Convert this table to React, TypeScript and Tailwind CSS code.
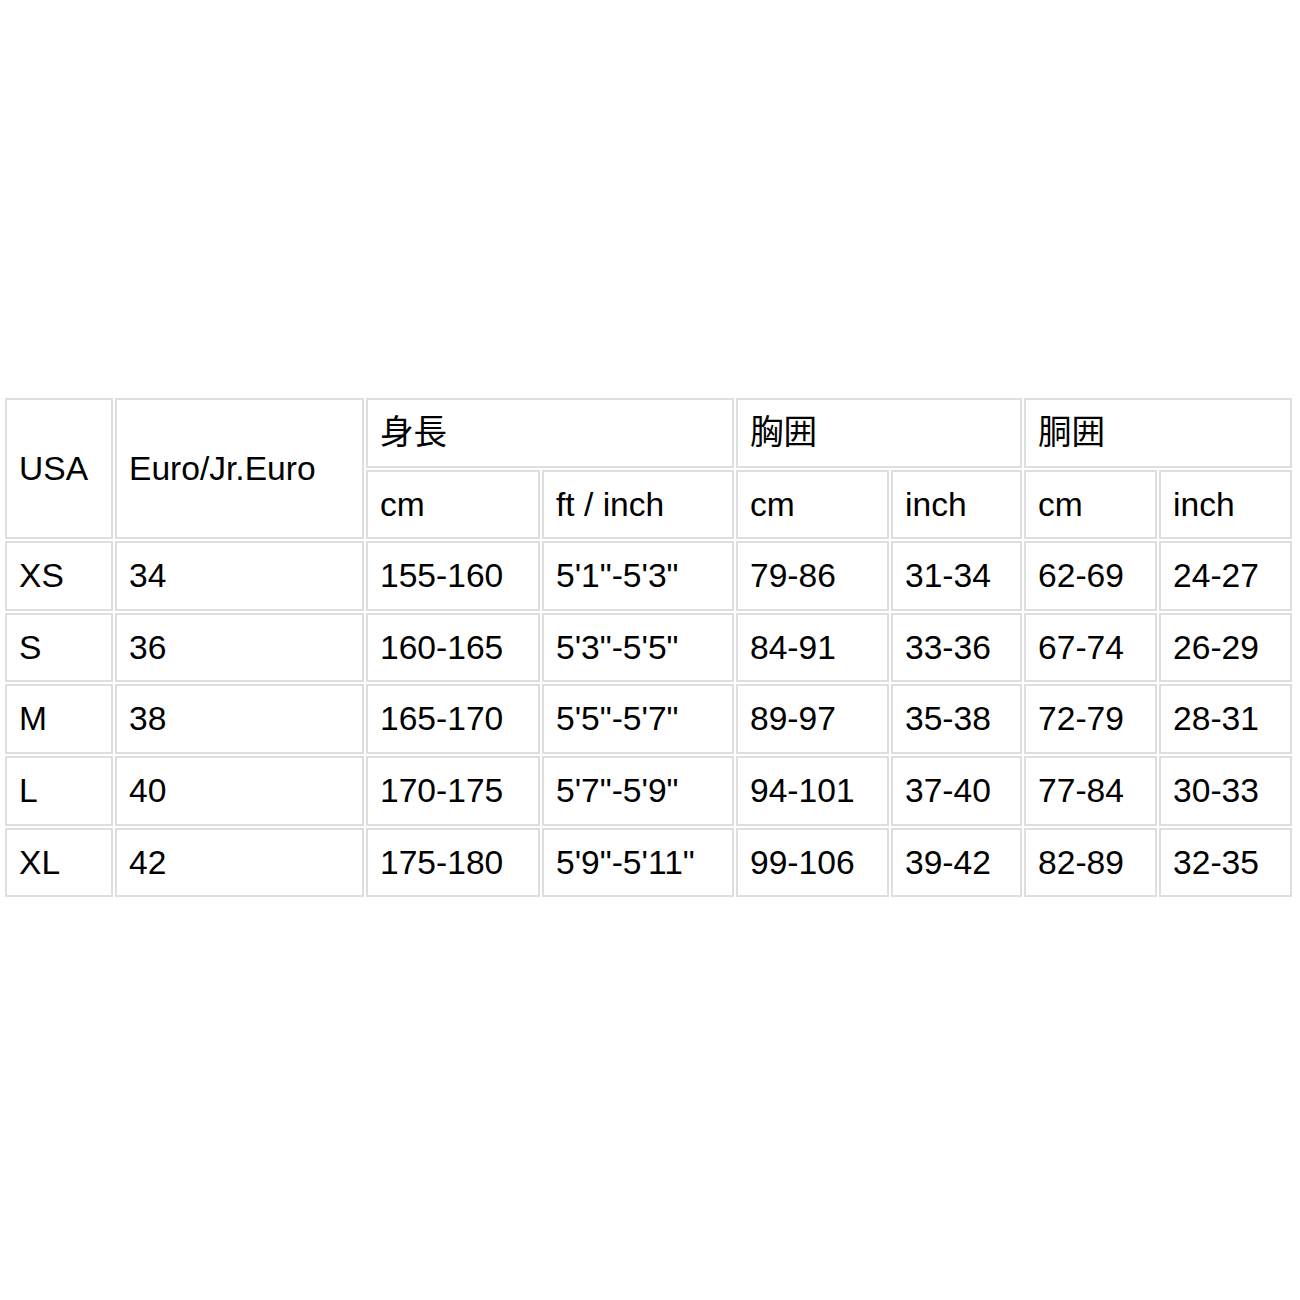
import React from "react";

const widths = [108, 249, 174, 192, 153, 131, 133, 133];

const rows: string[][] = [
  ["XS", "34", "155-160", "5'1\"-5'3\"", "79-86", "31-34", "62-69", "24-27"],
  ["S", "36", "160-165", "5'3\"-5'5\"", "84-91", "33-36", "67-74", "26-29"],
  ["M", "38", "165-170", "5'5\"-5'7\"", "89-97", "35-38", "72-79", "28-31"],
  ["L", "40", "170-175", "5'7\"-5'9\"", "94-101", "37-40", "77-84", "30-33"],
  ["XL", "42", "175-180", "5'9\"-5'11\"", "99-106", "39-42", "82-89", "32-35"],
];

const cell =
  "border-2 border-[#dedede] pl-[12px] pr-1 text-left align-middle font-normal h-[69.6px] whitespace-nowrap";

export default function App() {
  return (
    <div
      className="w-[1300px] h-[1300px] bg-white pt-[396px] pl-[3px] text-black text-[33.6px] leading-none"
      style={{ fontFamily: '"Liberation Sans", Arial, "Noto Sans CJK JP", sans-serif' }}
    >
      <table className="table-fixed border-separate border-spacing-[2px] w-[1291px]">
        <colgroup>
          {widths.map((w, i) => (
            <col key={i} style={{ width: w }} />
          ))}
        </colgroup>
        <thead>
          <tr>
            <th rowSpan={2} className={cell}>USA</th>
            <th rowSpan={2} className={cell}>Euro/Jr.Euro</th>
            <th colSpan={2} className={cell}>身長</th>
            <th colSpan={2} className={cell}>胸囲</th>
            <th colSpan={2} className={cell}>胴囲</th>
          </tr>
          <tr>
            <th className={cell}>cm</th>
            <th className={cell}>ft / inch</th>
            <th className={cell}>cm</th>
            <th className={cell}>inch</th>
            <th className={cell}>cm</th>
            <th className={cell}>inch</th>
          </tr>
        </thead>
        <tbody>
          {rows.map((r, i) => (
            <tr key={i}>
              {r.map((v, j) => (
                <td key={j} className={cell}>{v}</td>
              ))}
            </tr>
          ))}
        </tbody>
      </table>
    </div>
  );
}
